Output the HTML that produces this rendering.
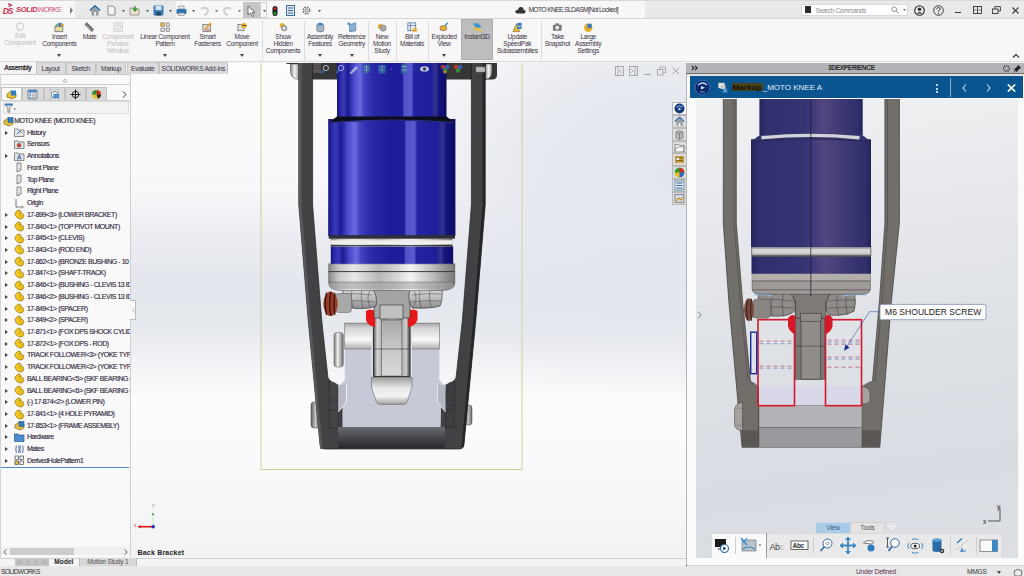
<!DOCTYPE html>
<html><head><meta charset="utf-8">
<style>
*{margin:0;padding:0;box-sizing:border-box}
html,body{width:1024px;height:576px;overflow:hidden;background:#f5f5f5;font-family:"Liberation Sans",sans-serif;color:#333}
.a{position:absolute}
.t{position:absolute;white-space:nowrap;font-size:7px;line-height:8px}
#title{left:0;top:0;width:1024px;height:19px;background:#f7f7f7;border-top:1px solid #d9d9d9;border-bottom:1px solid #d6d6d6}
#ribbon{left:0;top:19px;width:1024px;height:43px;background:#f7f7f7;border-bottom:1px solid #dadada}
#tabs{left:0;top:62px;width:228px;height:12px;z-index:5}
#fm{left:0;top:74px;width:131px;height:483px;background:#f9f9f9;border-right:1px solid #cfcfcf;overflow:hidden}
#gfx{left:131px;top:63px;width:556px;height:494px;background:radial-gradient(ellipse 62% 48% at 100% 22%, rgba(228,231,238,1) 0%, rgba(228,231,238,0.85) 45%, rgba(228,231,238,0) 100%),linear-gradient(180deg,#fdfdfd 0%,#f7f8f9 25%,#ebedf2 35%,#e3e6ec 45%,#e6e9ee 54%,#f1f2f5 60%,#fcfcfc 68%,#f8f9fa 84%,#f0f2f4 100%)}
#tp{left:686px;top:62px;width:338px;height:502.5px;background:#fbfbfb}
#status{left:0;top:564.5px;width:1024px;height:11.5px;background:#e8e8e8;border-top:1px solid #d4d4d4}
.rl{position:absolute;width:80px;text-align:center;font-size:6.6px;line-height:7px;letter-spacing:-0.3px;white-space:nowrap}
.rb{position:absolute;top:0;text-align:center;font-size:7px;line-height:7px;color:#3b3344}
.rb.dis{color:#b8b8b8}
.sep{position:absolute;top:2px;width:1px;height:40px;background:#dcdcdc}
.tab{position:absolute;top:0;height:12px;font-size:6.6px;line-height:11px;letter-spacing:-0.3px;text-align:center;color:#3a3346;background:#dcdcdc;border-right:1px solid #c2c2c2;border-top:1px solid #c8c8c8;border-left:1px solid #c8c8c8;white-space:nowrap}
.row{position:absolute;height:12px;font-size:7px;line-height:12px;letter-spacing:-0.45px;color:#2a2238;white-space:nowrap;overflow:hidden;width:104px;-webkit-text-stroke:0.12px #2a2238}
</style></head><body>
<div id="title" class="a">
 <div class="a" style="left:75px;top:0;width:101px;height:17px;background:#e9e9e9"></div>
 <div class="a" style="left:645px;top:0;width:379px;height:17px;background:#e9e9e9"></div>
 <div class="a" style="left:243px;top:1px;width:17px;height:16px;background:#c6c6c6"></div>
 <div class="a" style="left:260px;top:1px;width:7px;height:16px;background:#f9f9f9;border:1px solid #cfcfcf"></div>
 <svg class="a" style="left:2px;top:2px" width="13" height="12" viewBox="0 0 13 12"><path d="M6 1.2 Q8.5 1.2 9.5 2.2 L6.5 3.8" stroke="#cc2c4c" stroke-width="1.2" fill="none"/><text x="0.8" y="10.6" font-family="Liberation Sans" font-weight="bold" font-style="italic" font-size="8.5" fill="#cc2c4c" letter-spacing="-1.2">DS</text></svg>
 <div class="t" style="left:16px;top:4px;font-size:7.5px;line-height:10px;font-weight:bold;font-style:italic;color:#cf2d52;letter-spacing:-0.3px">SOLID<span style="font-weight:normal;letter-spacing:-1.1px;color:#d8587a">WORKS</span></div>
 <svg class="a" style="left:69px;top:6px" width="5" height="7"><path d="M1 0 L4 3.5 L1 7Z" fill="#7a7a7a"/></svg>
 <!-- home -->
 <svg class="a" style="left:89px;top:3.5px" width="12" height="11" viewBox="0 0 12 11"><path d="M1 5.5 L6 1 L11 5.5" stroke="#1e5f99" stroke-width="1.6" fill="none"/><path d="M2.5 5.5 V10.5 H9.5 V5.5 L6 2.5Z" fill="#9a9a9a"/><rect x="5" y="7" width="2" height="3.5" fill="#eee"/></svg>
 <!-- new -->
 <svg class="a" style="left:107px;top:4px" width="9" height="11"><path d="M1 1 H6 L8 3 V10 H1Z" fill="#f4f4f4" stroke="#8a8a8a"/></svg>
 <svg class="a" style="left:121.5px;top:8.5px" width="3" height="2.5"><path d="M0 0 H3 L1.5 2.2Z" fill="#555"/></svg>
 <!-- open -->
 <svg class="a" style="left:129px;top:4px" width="12" height="11"><path d="M1 3 H5 L6 4 H10 V10 H1Z" fill="#e7e2c8" stroke="#8d8d8d" stroke-width="0.8"/><path d="M6 1 V5 M4 3.5 L6 6 L8 3.5" stroke="#2a9a2a" stroke-width="1.4" fill="none"/></svg>
 <svg class="a" style="left:145.5px;top:8.5px" width="3" height="2.5"><path d="M0 0 H3 L1.5 2.2Z" fill="#555"/></svg>
 <!-- save -->
 <svg class="a" style="left:153px;top:4px" width="11" height="11"><rect x="0.5" y="0.5" width="10" height="10" rx="1" fill="#3d7fb8"/><rect x="2.5" y="1" width="6" height="4" fill="#d8e4ee"/><rect x="3" y="7" width="5" height="3.5" fill="#264a6a"/></svg>
 <svg class="a" style="left:168.5px;top:8.5px" width="3" height="2.5"><path d="M0 0 H3 L1.5 2.2Z" fill="#555"/></svg>
 <!-- print -->
 <svg class="a" style="left:176px;top:4px" width="11" height="11"><rect x="3" y="1" width="5" height="3" fill="#eee" stroke="#888" stroke-width="0.7"/><rect x="0.5" y="4" width="10" height="5" rx="1" fill="#2f74b5"/><rect x="2.5" y="8" width="6" height="2.5" fill="#ddd" stroke="#888" stroke-width="0.6"/></svg>
 <svg class="a" style="left:191.5px;top:8.5px" width="3" height="2.5"><path d="M0 0 H3 L1.5 2.2Z" fill="#555"/></svg>
 <!-- undo/redo -->
 <svg class="a" style="left:199px;top:4px" width="11" height="11"><path d="M2 4 Q7 1 9 5 Q9 9 5 10" stroke="#cfcfcf" stroke-width="2" fill="none"/></svg>
 <svg class="a" style="left:214.5px;top:8.5px" width="3" height="2.5"><path d="M0 0 H3 L1.5 2.2Z" fill="#777"/></svg>
 <svg class="a" style="left:222px;top:4px" width="11" height="11"><path d="M9 4 Q4 1 2 5 Q2 9 6 10" stroke="#cfcfcf" stroke-width="2" fill="none"/></svg>
 <svg class="a" style="left:237.5px;top:8.5px" width="3" height="2.5"><path d="M0 0 H3 L1.5 2.2Z" fill="#777"/></svg>
 <svg class="a" style="left:247px;top:4px" width="9" height="12"><path d="M1 1 L1 10 L3.5 8 L5.5 11.5 L7 10.8 L5 7.5 L8 7.5Z" fill="#fafafa" stroke="#555" stroke-width="0.8"/></svg>
 <svg class="a" style="left:262.5px;top:8.5px" width="3" height="2.5"><path d="M0 0 H3 L1.5 2.2Z" fill="#555"/></svg>
 <svg class="a" style="left:272px;top:5px" width="6" height="10"><rect x="0.5" y="0" width="5" height="10" rx="2.5" fill="#222"/><circle cx="3" cy="2.6" r="1.3" fill="#e02020"/><circle cx="3" cy="7.4" r="1.3" fill="#22b030"/></svg>
 <svg class="a" style="left:286px;top:4px" width="9" height="11"><rect x="0.5" y="0.5" width="8" height="10" fill="#dde6ef" stroke="#3a6e9e"/><path d="M2 3 H7 M2 5.5 H7 M2 8 H7" stroke="#3a6e9e"/></svg>
 <svg class="a" style="left:301px;top:4px" width="11" height="11" viewBox="0 0 11 11"><circle cx="5.5" cy="5.5" r="3.3" fill="none" stroke="#6a6a6a" stroke-width="1.4" stroke-dasharray="1.6 1"/><circle cx="5.5" cy="5.5" r="1.5" fill="none" stroke="#6a6a6a" stroke-width="0.9"/></svg>
 <svg class="a" style="left:317.5px;top:8.5px" width="3" height="2.5"><path d="M0 0 H3 L1.5 2.2Z" fill="#555"/></svg>
 <!-- title -->
 <svg class="a" style="left:515px;top:5px" width="11" height="8"><path d="M2.5 7.5 Q0 7.5 0.5 5 Q1 3.5 3 4 Q3.5 0.5 6.5 1 Q9 1.5 8.5 4 Q11 4 10.5 6.3 Q10 7.5 8.5 7.5Z" fill="#333"/></svg>
 <div class="t" style="left:528.4px;top:4.5px;font-size:6.8px;color:#3c3046;letter-spacing:-0.68px">MOTO KNEE.SLDASM[Not Locked]</div>
 <!-- search -->
 <div class="a" style="left:801px;top:3px;width:107px;height:12px;background:#fff;border:1px solid #d8d8d8"></div>
 <div class="a" style="left:805px;top:5px;width:6px;height:7px;background:#2a2a2a"></div>
 <div class="t" style="left:815.5px;top:5.5px;font-size:6.5px;color:#8a8a8a;letter-spacing:-0.35px">Search Commands</div>
 <svg class="a" style="left:891px;top:5px" width="8" height="8"><circle cx="3.2" cy="3.2" r="2.4" fill="none" stroke="#888" stroke-width="0.9"/><path d="M5 5 L7.5 7.5" stroke="#888" stroke-width="1"/></svg>
 <svg class="a" style="left:903px;top:8px" width="3" height="2"><path d="M0 0 H3 L1.5 2Z" fill="#777"/></svg>
 <svg class="a" style="left:914px;top:4px" width="11" height="11"><circle cx="5.5" cy="5.5" r="4.8" fill="none" stroke="#2a2a2a" stroke-width="1.1"/><circle cx="5.5" cy="4.3" r="1.7" fill="#2a2a2a"/><path d="M2.5 8.5 Q5.5 5.5 8.5 8.5" fill="#2a2a2a"/></svg>
 <svg class="a" style="left:933px;top:4px" width="11" height="11"><circle cx="5.5" cy="5.5" r="4.8" fill="none" stroke="#2a2a2a" stroke-width="0.9"/><path d="M3.8 4.2 Q3.8 2.5 5.5 2.5 Q7.2 2.5 7.2 4 Q7.2 5 5.5 5.8 V6.8" fill="none" stroke="#2a2a2a" stroke-width="0.9"/><circle cx="5.5" cy="8.4" r="0.6" fill="#2a2a2a"/></svg>
 <div class="a" style="left:955px;top:11px;width:6px;height:1.3px;background:#333"></div>
 <svg class="a" style="left:973px;top:5px" width="9" height="8"><rect x="0.5" y="0.5" width="8" height="7" fill="none" stroke="#333" stroke-width="0.9"/><path d="M4.5 0.5 V7.5 M1.5 4 H3.5 M5.5 4 H7.5" stroke="#333" stroke-width="0.8"/></svg>
 <svg class="a" style="left:992px;top:5px" width="9" height="8"><rect x="0.5" y="3" width="5.5" height="4.5" fill="none" stroke="#333" stroke-width="0.9"/><path d="M2.8 3 V0.6 H8.4 V5 H6" fill="none" stroke="#333" stroke-width="0.9"/></svg>
 <svg class="a" style="left:1012px;top:6px" width="7" height="7"><path d="M0.5 0.5 L6.5 6.5 M6.5 0.5 L0.5 6.5" stroke="#333" stroke-width="1.1"/></svg>
</div>
<div id="ribbon" class="a">
<div class="a" style="left:461px;top:0px;width:32px;height:41px;background:#bdbdbd;border:1px solid #aeaeae"></div>
<div class="sep" style="left:262px"></div>
<div class="sep" style="left:304px"></div>
<div class="sep" style="left:368px"></div>
<div class="sep" style="left:396px"></div>
<div class="sep" style="left:428px"></div>
<div class="sep" style="left:541px"></div>
<svg class="a" style="left:14.8px;top:3.3px" width="10.5" height="10.5" viewBox="0 0 12 12"><circle cx="6" cy="5" r="4" fill="none" stroke="#d0d0d0" stroke-width="1.5"/><path d="M3 9 L5 11" stroke="#d0d0d0" stroke-width="1.5"/></svg>
<div class="rl" style="left:-20.0px;top:13.4px;color:#bdbdbd">Edit</div>
<div class="rl" style="left:-20.0px;top:20.2px;color:#bdbdbd">Component</div>
<svg class="a" style="left:54.2px;top:3.3px" width="10.5" height="10.5" viewBox="0 0 12 12"><path d="M1 5 H10 V11 H1Z" fill="#e8dca0" stroke="#555" stroke-width="0.8"/><rect x="5" y="1" width="4" height="4" fill="#3a7bc0"/><rect x="8" y="2" width="3" height="3" fill="#e0a020"/><path d="M2 4 L5 2" stroke="#3a9a3a" stroke-width="1.3"/></svg>
<div class="rl" style="left:19.4px;top:14.2px;color:#3b3146">Insert</div>
<div class="rl" style="left:19.4px;top:21.0px;color:#3b3146">Components</div>
<svg class="a" style="left:57.4px;top:35px" width="4" height="3"><path d="M0 0 H4 L2 3Z" fill="#444"/></svg>
<svg class="a" style="left:84.4px;top:3.3px" width="10.5" height="10.5" viewBox="0 0 12 12"><path d="M2 3 L9 10 M3 1.5 L10 8.5" stroke="#6a6a6a" stroke-width="2.2" stroke-linecap="round"/><path d="M2 3 L9 10" stroke="#d8d8d8" stroke-width="0.8"/></svg>
<div class="rl" style="left:49.6px;top:14.2px;color:#3b3146">Mate</div>
<svg class="a" style="left:112.6px;top:3.3px" width="10.5" height="10.5" viewBox="0 0 12 12"><rect x="1" y="1" width="10" height="10" fill="#eee" stroke="#d0d0d0"/><circle cx="6" cy="6" r="3" fill="none" stroke="#d0d0d0"/></svg>
<div class="rl" style="left:77.8px;top:14.2px;color:#bdbdbd">Component</div>
<div class="rl" style="left:77.8px;top:21.0px;color:#bdbdbd">Preview</div>
<div class="rl" style="left:77.8px;top:27.8px;color:#bdbdbd">Window</div>
<svg class="a" style="left:159.8px;top:3.3px" width="10.5" height="10.5" viewBox="0 0 12 12"><rect x="1" y="1" width="4" height="4" fill="#e8c040" stroke="#555" stroke-width="0.6"/><rect x="7" y="1" width="4" height="4" fill="#ddd" stroke="#555" stroke-width="0.6"/><rect x="1" y="7" width="4" height="4" fill="#ddd" stroke="#555" stroke-width="0.6"/><rect x="7" y="7" width="4" height="4" fill="#ddd" stroke="#555" stroke-width="0.6"/></svg>
<div class="rl" style="left:125.0px;top:14.2px;color:#3b3146">Linear Component</div>
<div class="rl" style="left:125.0px;top:21.0px;color:#3b3146">Pattern</div>
<svg class="a" style="left:163.0px;top:35px" width="4" height="3"><path d="M0 0 H4 L2 3Z" fill="#444"/></svg>
<svg class="a" style="left:202.3px;top:3.3px" width="10.5" height="10.5" viewBox="0 0 12 12"><rect x="1" y="3" width="9" height="8" fill="#ddd" stroke="#555" stroke-width="0.7"/><path d="M4 8 L10 1" stroke="#e0a020" stroke-width="1.8"/><path d="M3 9 H9" stroke="#c03030" stroke-width="0.8"/></svg>
<div class="rl" style="left:167.5px;top:14.2px;color:#3b3146">Smart</div>
<div class="rl" style="left:167.5px;top:21.0px;color:#3b3146">Fasteners</div>
<svg class="a" style="left:236.8px;top:3.3px" width="10.5" height="10.5" viewBox="0 0 12 12"><rect x="1" y="3" width="7" height="7" fill="#ddd" stroke="#555" stroke-width="0.7"/><circle cx="8" cy="4" r="3" fill="#e8b020"/><path d="M6 4 H11" stroke="#333" stroke-width="0.8"/></svg>
<div class="rl" style="left:202.0px;top:14.2px;color:#3b3146">Move</div>
<div class="rl" style="left:202.0px;top:21.0px;color:#3b3146">Component</div>
<svg class="a" style="left:240.0px;top:35px" width="4" height="3"><path d="M0 0 H4 L2 3Z" fill="#444"/></svg>
<svg class="a" style="left:277.8px;top:3.3px" width="10.5" height="10.5" viewBox="0 0 12 12"><circle cx="5" cy="4" r="3" fill="#e8b030"/><circle cx="7" cy="7" r="3.5" fill="#999"/><circle cx="7" cy="7" r="1.6" fill="#eee"/></svg>
<div class="rl" style="left:243.0px;top:14.2px;color:#3b3146">Show</div>
<div class="rl" style="left:243.0px;top:21.0px;color:#3b3146">Hidden</div>
<div class="rl" style="left:243.0px;top:27.8px;color:#3b3146">Components</div>
<svg class="a" style="left:314.8px;top:3.3px" width="10.5" height="10.5" viewBox="0 0 12 12"><rect x="2" y="2" width="8" height="9" rx="2" fill="#a8b4c0" stroke="#4a6a8a" stroke-width="0.7"/><rect x="4" y="1" width="4" height="3" fill="#3a7bc0"/></svg>
<div class="rl" style="left:280.0px;top:14.2px;color:#3b3146">Assembly</div>
<div class="rl" style="left:280.0px;top:21.0px;color:#3b3146">Features</div>
<svg class="a" style="left:318.0px;top:35px" width="4" height="3"><path d="M0 0 H4 L2 3Z" fill="#444"/></svg>
<svg class="a" style="left:346.6px;top:3.3px" width="10.5" height="10.5" viewBox="0 0 12 12"><path d="M3 3 L10 1 V10 L3 11Z" fill="#8ab0d8" stroke="#3a6a9a" stroke-width="0.7"/><circle cx="2" cy="2" r="1.5" fill="#3a7bc0"/></svg>
<div class="rl" style="left:311.8px;top:14.2px;color:#3b3146">Reference</div>
<div class="rl" style="left:311.8px;top:21.0px;color:#3b3146">Geometry</div>
<svg class="a" style="left:349.8px;top:35px" width="4" height="3"><path d="M0 0 H4 L2 3Z" fill="#444"/></svg>
<svg class="a" style="left:376.8px;top:3.3px" width="10.5" height="10.5" viewBox="0 0 12 12"><circle cx="4" cy="5" r="3" fill="#e8b030"/><circle cx="7" cy="7" r="3.5" fill="#aaa" stroke="#666" stroke-width="0.6"/></svg>
<div class="rl" style="left:342.0px;top:14.2px;color:#3b3146">New</div>
<div class="rl" style="left:342.0px;top:21.0px;color:#3b3146">Motion</div>
<div class="rl" style="left:342.0px;top:27.8px;color:#3b3146">Study</div>
<svg class="a" style="left:406.8px;top:3.3px" width="10.5" height="10.5" viewBox="0 0 12 12"><rect x="1" y="1" width="9" height="9" fill="#eee" stroke="#3a6a9a" stroke-width="0.8"/><path d="M1 4 H10 M4 1 V10" stroke="#3a6a9a" stroke-width="0.7"/><circle cx="9" cy="9" r="2.5" fill="#e8b030"/></svg>
<div class="rl" style="left:372.0px;top:14.2px;color:#3b3146">Bill of</div>
<div class="rl" style="left:372.0px;top:21.0px;color:#3b3146">Materials</div>
<svg class="a" style="left:438.8px;top:3.3px" width="10.5" height="10.5" viewBox="0 0 12 12"><ellipse cx="5" cy="7" rx="4" ry="3" fill="#e8b030" stroke="#555" stroke-width="0.6"/><path d="M7 4 L10 1" stroke="#3a7bc0" stroke-width="1.6"/></svg>
<div class="rl" style="left:404.0px;top:14.2px;color:#3b3146">Exploded</div>
<div class="rl" style="left:404.0px;top:21.0px;color:#3b3146">View</div>
<svg class="a" style="left:442.0px;top:35px" width="4" height="3"><path d="M0 0 H4 L2 3Z" fill="#444"/></svg>
<svg class="a" style="left:471.8px;top:3.3px" width="10.5" height="10.5" viewBox="0 0 12 12"><path d="M1 2 L7 1 L11 6 L5 7Z" fill="#3a9ad0"/><path d="M2 5 L10 8 L11 11 L3 9Z" fill="#e8c040"/></svg>
<div class="rl" style="left:437.0px;top:14.2px;color:#3b3146">Instant3D</div>
<svg class="a" style="left:512.1px;top:3.3px" width="10.5" height="10.5" viewBox="0 0 12 12"><path d="M1 11 L5 2 L9 11Z" fill="#e8c020" stroke="#555" stroke-width="0.6"/><rect x="6" y="1" width="5" height="7" fill="#3a7bc0"/><path d="M7 5 H10" stroke="#fff"/></svg>
<div class="rl" style="left:477.3px;top:14.2px;color:#3b3146">Update</div>
<div class="rl" style="left:477.3px;top:21.0px;color:#3b3146">SpeedPak</div>
<div class="rl" style="left:477.3px;top:27.8px;color:#3b3146">Subassemblies</div>
<svg class="a" style="left:552.2px;top:3.3px" width="10.5" height="10.5" viewBox="0 0 12 12"><rect x="1" y="3" width="10" height="7" rx="1" fill="#777"/><rect x="4" y="1.5" width="4" height="2" fill="#777"/><circle cx="6" cy="6.5" r="2.2" fill="#eee"/></svg>
<div class="rl" style="left:517.4px;top:14.2px;color:#3b3146">Take</div>
<div class="rl" style="left:517.4px;top:21.0px;color:#3b3146">Snapshot</div>
<svg class="a" style="left:583.0px;top:3.3px" width="10.5" height="10.5" viewBox="0 0 12 12"><circle cx="6" cy="6.5" r="4.8" fill="#e8b020"/><rect x="5" y="2" width="5" height="5" fill="#3a7bc0"/></svg>
<div class="rl" style="left:548.2px;top:14.2px;color:#3b3146">Large</div>
<div class="rl" style="left:548.2px;top:21.0px;color:#3b3146">Assembly</div>
<div class="rl" style="left:548.2px;top:27.8px;color:#3b3146">Settings</div>
<svg class="a" style="left:1012px;top:34px" width="8" height="5"><path d="M1 4.5 L4 1.5 L7 4.5" stroke="#333" stroke-width="1.2" fill="none"/></svg>
</div>
<div id="tabs" class="a">
<div class="tab" style="left:0px;width:35.6px;background:#f5f5f5;border:none;color:#1a1a1a;font-weight:normal;letter-spacing:-0.3px;font-size:6.8px;-webkit-text-stroke:0.25px #222">Assembly</div>
<div class="tab" style="left:35.6px;width:30.0px">Layout</div>
<div class="tab" style="left:65.6px;width:30.0px">Sketch</div>
<div class="tab" style="left:95.6px;width:30.9px">Markup</div>
<div class="tab" style="left:126.5px;width:32.4px">Evaluate</div>
<div class="tab" style="left:158.9px;width:68.9px">SOLIDWORKS Add-Ins</div>
</div>
<div id="fm" class="a">
<div class="a" style="left:0;top:0;width:131px;height:1px;background:#c8c8c8"></div>
<div class="a" style="left:63px;top:5px;width:4px;height:4px;border:1px solid #bbb;border-radius:50%"></div>
<div class="a" style="left:0;top:10px;width:131px;height:1px;background:#cfcfcf"></div>
<div class="a" style="left:1.3px;top:13px;width:20.4px;height:13.5px;background:#f9f9f9;border:1px solid #c4c4c4;border-bottom:none;"></div>
<div class="a" style="left:21.8px;top:13px;width:21.8px;height:13.5px;background:#d9d9d9;border:1px solid #c4c4c4;"></div>
<div class="a" style="left:43.5px;top:13px;width:21.1px;height:13.5px;background:#d9d9d9;border:1px solid #c4c4c4;"></div>
<div class="a" style="left:64.6px;top:13px;width:21.8px;height:13.5px;background:#d9d9d9;border:1px solid #c4c4c4;"></div>
<div class="a" style="left:86.4px;top:13px;width:21.0px;height:13.5px;background:#d9d9d9;border:1px solid #c4c4c4;"></div>
<div class="a" style="left:0;top:26px;width:131px;height:1px;background:#d0d0d0"></div>
<svg class="a" style="left:6.0px;top:15px" width="11" height="11" viewBox="0 0 11 11"><path d="M1 5 L5 2 L10 4 L10 8 L6 10 L1 8Z" fill="#e8c030" stroke="#6a5a10" stroke-width="0.6"/><rect x="5" y="1.5" width="5" height="5" fill="#2f7fc8"/></svg>
<svg class="a" style="left:27.1px;top:15px" width="11" height="11" viewBox="0 0 11 11"><rect x="1" y="1" width="9" height="9" rx="1" fill="#eef2f6" stroke="#4a5a6a" stroke-width="0.7"/><rect x="1.3" y="1.3" width="8.4" height="2" fill="#3a7ac0"/><path d="M2.3 4.9 H4 M2.3 6.8 H4 M2.3 8.6 H4" stroke="#3a7ac0" stroke-width="1.1"/><path d="M4.8 4.9 H9 M4.8 6.8 H9 M4.8 8.6 H9" stroke="#8a8a8a" stroke-width="0.8"/></svg>
<svg class="a" style="left:48.5px;top:15px" width="11" height="11" viewBox="0 0 11 11"><path d="M2.5 3.5 Q5.5 1.5 9 3.5 V8 Q5.5 10 2.5 8Z" fill="#f4f4f4" stroke="#555" stroke-width="0.6"/><rect x="4.5" y="5" width="5.5" height="4" fill="#2f7fc8"/><path d="M5.5 7 H9" stroke="#cde" stroke-width="0.6"/><path d="M0.8 0.8 H2 M9 0.8 H10.2 M0.8 10.2 H2 M9 10.2 H10.2" stroke="#3a8ad0" stroke-width="0.8"/></svg>
<svg class="a" style="left:70.0px;top:15px" width="11" height="11" viewBox="0 0 11 11"><circle cx="5.5" cy="5.5" r="3.2" fill="none" stroke="#222" stroke-width="1"/><path d="M5.5 0.5 V10.5 M0.5 5.5 H10.5" stroke="#222" stroke-width="1"/></svg>
<svg class="a" style="left:91.4px;top:15px" width="11" height="11" viewBox="0 0 11 11"><circle cx="5.5" cy="5.5" r="4.5" fill="#e8c030"/><path d="M5.5 5.5 L5.5 1 A4.5 4.5 0 0 1 10 5.5Z" fill="#d02020"/><path d="M5.5 5.5 L1 5.5 A4.5 4.5 0 0 1 5.5 1Z" fill="#2a8a3a"/><path d="M5.5 5.5 L10 5.5 A4.5 4.5 0 0 1 7 9.7Z" fill="#222"/></svg>
<svg class="a" style="left:122px;top:17px" width="5" height="7"><path d="M1 0.5 L4 3.5 L1 6.5" stroke="#333" stroke-width="1" fill="none"/></svg>
<div class="a" style="left:2.6px;top:27.4px;width:126px;height:13px;background:#f2f2f2;border:1px solid #dedede"></div>
<svg class="a" style="left:4px;top:29px" width="13" height="10"><path d="M1 1.5 H8.5 L5.6 5 V9.2 L3.9 9.2 V5Z" fill="#e8e8e8" stroke="#777" stroke-width="0.8"/><rect x="0.6" y="0.4" width="8.4" height="2" rx="1" fill="#3a7bc0"/><path d="M9.8 5.5 H12 L10.9 6.8Z" fill="#333"/></svg>
<svg class="a" style="left:2.6px;top:41.5px" width="11" height="11" viewBox="0 0 11 11"><path d="M1 5 L5 2 L10 4 L10 8 L6 10 L1 8Z" fill="#e8c030" stroke="#6a5a10" stroke-width="0.6"/><rect x="5" y="1.5" width="5" height="5" fill="#2f7fc8" stroke="#1a4a7a" stroke-width="0.5"/></svg>
<div class="row" style="left:14.2px;top:41.0px">MOTO KNEE (MOTO KNEE)</div>
<svg class="a" style="left:5px;top:56.7px" width="3" height="4"><path d="M0 0 L3 2 L0 4Z" fill="#444"/></svg>
<svg class="a" style="left:14px;top:53.2px" width="11" height="11" viewBox="0 0 11 11"><path d="M0.5 2 H4 L5 3 H10 V9.5 H0.5Z" fill="#e4e4e4" stroke="#707070" stroke-width="0.8"/><path d="M3 7 L6 4 L7.5 5.5" stroke="#2a6ab0" stroke-width="1" fill="none"/></svg>
<div class="row" style="left:26.9px;top:52.7px">History</div>
<svg class="a" style="left:14px;top:64.9px" width="11" height="11" viewBox="0 0 11 11"><path d="M0.5 2 H4 L5 3 H10 V9.5 H0.5Z" fill="#e4e4e4" stroke="#707070" stroke-width="0.8"/><circle cx="5" cy="6.3" r="2" fill="#d04030" stroke="#555" stroke-width="0.4"/></svg>
<div class="row" style="left:26.9px;top:64.4px">Sensors</div>
<svg class="a" style="left:5px;top:80.2px" width="3" height="4"><path d="M0 0 L3 2 L0 4Z" fill="#444"/></svg>
<svg class="a" style="left:14px;top:76.7px" width="11" height="11" viewBox="0 0 11 11"><path d="M0.5 2 H4 L5 3 H10 V9.5 H0.5Z" fill="#e4e4e4" stroke="#707070" stroke-width="0.8"/><path d="M3.5 8.5 L5.3 3.8 L7 8.5 M4.2 7 H6.4" stroke="#2a5ab0" stroke-width="0.9" fill="none"/></svg>
<div class="row" style="left:26.9px;top:76.2px">Annotations</div>
<svg class="a" style="left:14px;top:88.4px" width="11" height="11" viewBox="0 0 11 11"><path d="M3 1 H7 V8 L3 10Z" fill="none" stroke="#555" stroke-width="0.7"/><path d="M5 2 V9" stroke="#555" stroke-width="0.6" stroke-dasharray="1 1"/></svg>
<div class="row" style="left:26.9px;top:87.9px">Front Plane</div>
<svg class="a" style="left:14px;top:100.1px" width="11" height="11" viewBox="0 0 11 11"><path d="M3 1 H7 V8 L3 10Z" fill="none" stroke="#555" stroke-width="0.7"/><path d="M5 2 V9" stroke="#555" stroke-width="0.6" stroke-dasharray="1 1"/></svg>
<div class="row" style="left:26.9px;top:99.6px">Top Plane</div>
<svg class="a" style="left:14px;top:111.8px" width="11" height="11" viewBox="0 0 11 11"><path d="M3 1 H7 V8 L3 10Z" fill="none" stroke="#555" stroke-width="0.7"/><path d="M5 2 V9" stroke="#555" stroke-width="0.6" stroke-dasharray="1 1"/></svg>
<div class="row" style="left:26.9px;top:111.3px">Right Plane</div>
<svg class="a" style="left:14px;top:123.5px" width="11" height="11" viewBox="0 0 11 11"><path d="M2 1 V9 H9" fill="none" stroke="#555" stroke-width="0.8"/><path d="M8 7.5 L9.5 9 L8 10.5" fill="none" stroke="#555" stroke-width="0.6"/></svg>
<div class="row" style="left:26.9px;top:123.0px">Origin</div>
<svg class="a" style="left:5px;top:138.8px" width="3" height="4"><path d="M0 0 L3 2 L0 4Z" fill="#444"/></svg>
<svg class="a" style="left:14px;top:135.3px" width="11" height="11" viewBox="0 0 11 11"><path d="M2.5 2.5 Q4 0.3 6.3 1.5 Q7.5 3 6.5 4 Q8.5 3.5 9.5 5.5 Q10.5 8 8.5 9.5 Q6 10.8 3.5 9 Q0.8 7 1 4.5 Q1.3 3.3 2.5 2.5Z" fill="#f2c61a" stroke="#7a5a10" stroke-width="0.6"/><path d="M4.5 3 Q6 4.5 5.5 6.5 M6.5 5.5 Q8 6.5 7.5 8.5" stroke="#b08a10" stroke-width="0.5" fill="none"/></svg>
<div class="row" style="left:26.9px;top:134.8px">17-899&lt;3&gt; (LOWER BRACKET)</div>
<svg class="a" style="left:5px;top:150.5px" width="3" height="4"><path d="M0 0 L3 2 L0 4Z" fill="#444"/></svg>
<svg class="a" style="left:14px;top:147.0px" width="11" height="11" viewBox="0 0 11 11"><path d="M2.5 2.5 Q4 0.3 6.3 1.5 Q7.5 3 6.5 4 Q8.5 3.5 9.5 5.5 Q10.5 8 8.5 9.5 Q6 10.8 3.5 9 Q0.8 7 1 4.5 Q1.3 3.3 2.5 2.5Z" fill="#f2c61a" stroke="#7a5a10" stroke-width="0.6"/><path d="M4.5 3 Q6 4.5 5.5 6.5 M6.5 5.5 Q8 6.5 7.5 8.5" stroke="#b08a10" stroke-width="0.5" fill="none"/></svg>
<div class="row" style="left:26.9px;top:146.5px">17-840&lt;1&gt; (TOP PIVOT MOUNT)</div>
<svg class="a" style="left:5px;top:162.2px" width="3" height="4"><path d="M0 0 L3 2 L0 4Z" fill="#444"/></svg>
<svg class="a" style="left:14px;top:158.7px" width="11" height="11" viewBox="0 0 11 11"><path d="M2.5 2.5 Q4 0.3 6.3 1.5 Q7.5 3 6.5 4 Q8.5 3.5 9.5 5.5 Q10.5 8 8.5 9.5 Q6 10.8 3.5 9 Q0.8 7 1 4.5 Q1.3 3.3 2.5 2.5Z" fill="#f2c61a" stroke="#7a5a10" stroke-width="0.6"/><path d="M4.5 3 Q6 4.5 5.5 6.5 M6.5 5.5 Q8 6.5 7.5 8.5" stroke="#b08a10" stroke-width="0.5" fill="none"/></svg>
<div class="row" style="left:26.9px;top:158.2px">17-845&lt;1&gt; (CLEVIS)</div>
<svg class="a" style="left:5px;top:173.9px" width="3" height="4"><path d="M0 0 L3 2 L0 4Z" fill="#444"/></svg>
<svg class="a" style="left:14px;top:170.4px" width="11" height="11" viewBox="0 0 11 11"><path d="M2.5 2.5 Q4 0.3 6.3 1.5 Q7.5 3 6.5 4 Q8.5 3.5 9.5 5.5 Q10.5 8 8.5 9.5 Q6 10.8 3.5 9 Q0.8 7 1 4.5 Q1.3 3.3 2.5 2.5Z" fill="#f2c61a" stroke="#7a5a10" stroke-width="0.6"/><path d="M4.5 3 Q6 4.5 5.5 6.5 M6.5 5.5 Q8 6.5 7.5 8.5" stroke="#b08a10" stroke-width="0.5" fill="none"/></svg>
<div class="row" style="left:26.9px;top:169.9px">17-843&lt;1&gt; (ROD END)</div>
<svg class="a" style="left:5px;top:185.6px" width="3" height="4"><path d="M0 0 L3 2 L0 4Z" fill="#444"/></svg>
<svg class="a" style="left:14px;top:182.1px" width="11" height="11" viewBox="0 0 11 11"><path d="M2.5 2.5 Q4 0.3 6.3 1.5 Q7.5 3 6.5 4 Q8.5 3.5 9.5 5.5 Q10.5 8 8.5 9.5 Q6 10.8 3.5 9 Q0.8 7 1 4.5 Q1.3 3.3 2.5 2.5Z" fill="#f2c61a" stroke="#7a5a10" stroke-width="0.6"/><path d="M4.5 3 Q6 4.5 5.5 6.5 M6.5 5.5 Q8 6.5 7.5 8.5" stroke="#b08a10" stroke-width="0.5" fill="none"/></svg>
<div class="row" style="left:26.9px;top:181.6px">17-862&lt;1&gt; (BRONZE BUSHING - 10 ID</div>
<svg class="a" style="left:5px;top:197.4px" width="3" height="4"><path d="M0 0 L3 2 L0 4Z" fill="#444"/></svg>
<svg class="a" style="left:14px;top:193.9px" width="11" height="11" viewBox="0 0 11 11"><path d="M2.5 2.5 Q4 0.3 6.3 1.5 Q7.5 3 6.5 4 Q8.5 3.5 9.5 5.5 Q10.5 8 8.5 9.5 Q6 10.8 3.5 9 Q0.8 7 1 4.5 Q1.3 3.3 2.5 2.5Z" fill="#f2c61a" stroke="#7a5a10" stroke-width="0.6"/><path d="M4.5 3 Q6 4.5 5.5 6.5 M6.5 5.5 Q8 6.5 7.5 8.5" stroke="#b08a10" stroke-width="0.5" fill="none"/></svg>
<div class="row" style="left:26.9px;top:193.4px">17-847&lt;1&gt; (SHAFT-TRACK)</div>
<svg class="a" style="left:5px;top:209.1px" width="3" height="4"><path d="M0 0 L3 2 L0 4Z" fill="#444"/></svg>
<svg class="a" style="left:14px;top:205.6px" width="11" height="11" viewBox="0 0 11 11"><path d="M2.5 2.5 Q4 0.3 6.3 1.5 Q7.5 3 6.5 4 Q8.5 3.5 9.5 5.5 Q10.5 8 8.5 9.5 Q6 10.8 3.5 9 Q0.8 7 1 4.5 Q1.3 3.3 2.5 2.5Z" fill="#f2c61a" stroke="#7a5a10" stroke-width="0.6"/><path d="M4.5 3 Q6 4.5 5.5 6.5 M6.5 5.5 Q8 6.5 7.5 8.5" stroke="#b08a10" stroke-width="0.5" fill="none"/></svg>
<div class="row" style="left:26.9px;top:205.1px">17-846&lt;1&gt; (BUSHING - CLEVIS 13 ID</div>
<svg class="a" style="left:5px;top:220.8px" width="3" height="4"><path d="M0 0 L3 2 L0 4Z" fill="#444"/></svg>
<svg class="a" style="left:14px;top:217.3px" width="11" height="11" viewBox="0 0 11 11"><path d="M2.5 2.5 Q4 0.3 6.3 1.5 Q7.5 3 6.5 4 Q8.5 3.5 9.5 5.5 Q10.5 8 8.5 9.5 Q6 10.8 3.5 9 Q0.8 7 1 4.5 Q1.3 3.3 2.5 2.5Z" fill="#f2c61a" stroke="#7a5a10" stroke-width="0.6"/><path d="M4.5 3 Q6 4.5 5.5 6.5 M6.5 5.5 Q8 6.5 7.5 8.5" stroke="#b08a10" stroke-width="0.5" fill="none"/></svg>
<div class="row" style="left:26.9px;top:216.8px">17-846&lt;2&gt; (BUSHING - CLEVIS 13 ID</div>
<svg class="a" style="left:5px;top:232.5px" width="3" height="4"><path d="M0 0 L3 2 L0 4Z" fill="#444"/></svg>
<svg class="a" style="left:14px;top:229.0px" width="11" height="11" viewBox="0 0 11 11"><path d="M2.5 2.5 Q4 0.3 6.3 1.5 Q7.5 3 6.5 4 Q8.5 3.5 9.5 5.5 Q10.5 8 8.5 9.5 Q6 10.8 3.5 9 Q0.8 7 1 4.5 Q1.3 3.3 2.5 2.5Z" fill="#f2c61a" stroke="#7a5a10" stroke-width="0.6"/><path d="M4.5 3 Q6 4.5 5.5 6.5 M6.5 5.5 Q8 6.5 7.5 8.5" stroke="#b08a10" stroke-width="0.5" fill="none"/></svg>
<div class="row" style="left:26.9px;top:228.5px">17-849&lt;1&gt; (SPACER)</div>
<svg class="a" style="left:5px;top:244.2px" width="3" height="4"><path d="M0 0 L3 2 L0 4Z" fill="#444"/></svg>
<svg class="a" style="left:14px;top:240.7px" width="11" height="11" viewBox="0 0 11 11"><path d="M2.5 2.5 Q4 0.3 6.3 1.5 Q7.5 3 6.5 4 Q8.5 3.5 9.5 5.5 Q10.5 8 8.5 9.5 Q6 10.8 3.5 9 Q0.8 7 1 4.5 Q1.3 3.3 2.5 2.5Z" fill="#f2c61a" stroke="#7a5a10" stroke-width="0.6"/><path d="M4.5 3 Q6 4.5 5.5 6.5 M6.5 5.5 Q8 6.5 7.5 8.5" stroke="#b08a10" stroke-width="0.5" fill="none"/></svg>
<div class="row" style="left:26.9px;top:240.2px">17-849&lt;2&gt; (SPACER)</div>
<svg class="a" style="left:5px;top:256.0px" width="3" height="4"><path d="M0 0 L3 2 L0 4Z" fill="#444"/></svg>
<svg class="a" style="left:14px;top:252.5px" width="11" height="11" viewBox="0 0 11 11"><path d="M2.5 2.5 Q4 0.3 6.3 1.5 Q7.5 3 6.5 4 Q8.5 3.5 9.5 5.5 Q10.5 8 8.5 9.5 Q6 10.8 3.5 9 Q0.8 7 1 4.5 Q1.3 3.3 2.5 2.5Z" fill="#f2c61a" stroke="#7a5a10" stroke-width="0.6"/><path d="M4.5 3 Q6 4.5 5.5 6.5 M6.5 5.5 Q8 6.5 7.5 8.5" stroke="#b08a10" stroke-width="0.5" fill="none"/></svg>
<div class="row" style="left:26.9px;top:252.0px">17-871&lt;1&gt; (FOX DPS SHOCK CYLIDER</div>
<svg class="a" style="left:5px;top:267.7px" width="3" height="4"><path d="M0 0 L3 2 L0 4Z" fill="#444"/></svg>
<svg class="a" style="left:14px;top:264.2px" width="11" height="11" viewBox="0 0 11 11"><path d="M2.5 2.5 Q4 0.3 6.3 1.5 Q7.5 3 6.5 4 Q8.5 3.5 9.5 5.5 Q10.5 8 8.5 9.5 Q6 10.8 3.5 9 Q0.8 7 1 4.5 Q1.3 3.3 2.5 2.5Z" fill="#f2c61a" stroke="#7a5a10" stroke-width="0.6"/><path d="M4.5 3 Q6 4.5 5.5 6.5 M6.5 5.5 Q8 6.5 7.5 8.5" stroke="#b08a10" stroke-width="0.5" fill="none"/></svg>
<div class="row" style="left:26.9px;top:263.7px">17-872&lt;1&gt; (FOX DPS - ROD)</div>
<svg class="a" style="left:5px;top:279.4px" width="3" height="4"><path d="M0 0 L3 2 L0 4Z" fill="#444"/></svg>
<svg class="a" style="left:14px;top:275.9px" width="11" height="11" viewBox="0 0 11 11"><path d="M2.5 2.5 Q4 0.3 6.3 1.5 Q7.5 3 6.5 4 Q8.5 3.5 9.5 5.5 Q10.5 8 8.5 9.5 Q6 10.8 3.5 9 Q0.8 7 1 4.5 Q1.3 3.3 2.5 2.5Z" fill="#f2c61a" stroke="#7a5a10" stroke-width="0.6"/><path d="M4.5 3 Q6 4.5 5.5 6.5 M6.5 5.5 Q8 6.5 7.5 8.5" stroke="#b08a10" stroke-width="0.5" fill="none"/></svg>
<div class="row" style="left:26.9px;top:275.4px">TRACK FOLLOWER&lt;3&gt; (YOKE TYPE F</div>
<svg class="a" style="left:5px;top:291.1px" width="3" height="4"><path d="M0 0 L3 2 L0 4Z" fill="#444"/></svg>
<svg class="a" style="left:14px;top:287.6px" width="11" height="11" viewBox="0 0 11 11"><path d="M2.5 2.5 Q4 0.3 6.3 1.5 Q7.5 3 6.5 4 Q8.5 3.5 9.5 5.5 Q10.5 8 8.5 9.5 Q6 10.8 3.5 9 Q0.8 7 1 4.5 Q1.3 3.3 2.5 2.5Z" fill="#f2c61a" stroke="#7a5a10" stroke-width="0.6"/><path d="M4.5 3 Q6 4.5 5.5 6.5 M6.5 5.5 Q8 6.5 7.5 8.5" stroke="#b08a10" stroke-width="0.5" fill="none"/></svg>
<div class="row" style="left:26.9px;top:287.1px">TRACK FOLLOWER&lt;2&gt; (YOKE TYPE F</div>
<svg class="a" style="left:5px;top:302.8px" width="3" height="4"><path d="M0 0 L3 2 L0 4Z" fill="#444"/></svg>
<svg class="a" style="left:14px;top:299.3px" width="11" height="11" viewBox="0 0 11 11"><path d="M2.5 2.5 Q4 0.3 6.3 1.5 Q7.5 3 6.5 4 Q8.5 3.5 9.5 5.5 Q10.5 8 8.5 9.5 Q6 10.8 3.5 9 Q0.8 7 1 4.5 Q1.3 3.3 2.5 2.5Z" fill="#f2c61a" stroke="#7a5a10" stroke-width="0.6"/><path d="M4.5 3 Q6 4.5 5.5 6.5 M6.5 5.5 Q8 6.5 7.5 8.5" stroke="#b08a10" stroke-width="0.5" fill="none"/></svg>
<div class="row" style="left:26.9px;top:298.8px">BALL BEARING&lt;5&gt; (SKF BEARING #6</div>
<svg class="a" style="left:5px;top:314.6px" width="3" height="4"><path d="M0 0 L3 2 L0 4Z" fill="#444"/></svg>
<svg class="a" style="left:14px;top:311.1px" width="11" height="11" viewBox="0 0 11 11"><path d="M2.5 2.5 Q4 0.3 6.3 1.5 Q7.5 3 6.5 4 Q8.5 3.5 9.5 5.5 Q10.5 8 8.5 9.5 Q6 10.8 3.5 9 Q0.8 7 1 4.5 Q1.3 3.3 2.5 2.5Z" fill="#f2c61a" stroke="#7a5a10" stroke-width="0.6"/><path d="M4.5 3 Q6 4.5 5.5 6.5 M6.5 5.5 Q8 6.5 7.5 8.5" stroke="#b08a10" stroke-width="0.5" fill="none"/></svg>
<div class="row" style="left:26.9px;top:310.6px">BALL BEARING&lt;6&gt; (SKF BEARING #6</div>
<svg class="a" style="left:5px;top:326.3px" width="3" height="4"><path d="M0 0 L3 2 L0 4Z" fill="#444"/></svg>
<svg class="a" style="left:14px;top:322.8px" width="11" height="11" viewBox="0 0 11 11"><path d="M2.5 2.5 Q4 0.3 6.3 1.5 Q7.5 3 6.5 4 Q8.5 3.5 9.5 5.5 Q10.5 8 8.5 9.5 Q6 10.8 3.5 9 Q0.8 7 1 4.5 Q1.3 3.3 2.5 2.5Z" fill="#f2c61a" stroke="#7a5a10" stroke-width="0.6"/><path d="M4.5 3 Q6 4.5 5.5 6.5 M6.5 5.5 Q8 6.5 7.5 8.5" stroke="#b08a10" stroke-width="0.5" fill="none"/></svg>
<div class="row" style="left:26.9px;top:322.3px">(-) 17-874&lt;2&gt; (LOWER PIN)</div>
<svg class="a" style="left:5px;top:338.0px" width="3" height="4"><path d="M0 0 L3 2 L0 4Z" fill="#444"/></svg>
<svg class="a" style="left:14px;top:334.5px" width="11" height="11" viewBox="0 0 11 11"><path d="M2.5 2.5 Q4 0.3 6.3 1.5 Q7.5 3 6.5 4 Q8.5 3.5 9.5 5.5 Q10.5 8 8.5 9.5 Q6 10.8 3.5 9 Q0.8 7 1 4.5 Q1.3 3.3 2.5 2.5Z" fill="#f2c61a" stroke="#7a5a10" stroke-width="0.6"/><path d="M4.5 3 Q6 4.5 5.5 6.5 M6.5 5.5 Q8 6.5 7.5 8.5" stroke="#b08a10" stroke-width="0.5" fill="none"/></svg>
<div class="row" style="left:26.9px;top:334.0px">17-841&lt;1&gt; (4 HOLE PYRAMID)</div>
<svg class="a" style="left:5px;top:349.7px" width="3" height="4"><path d="M0 0 L3 2 L0 4Z" fill="#444"/></svg>
<svg class="a" style="left:14px;top:346.2px" width="11" height="11" viewBox="0 0 11 11"><path d="M1 5 L5 2 L10 4 L10 8 L6 10 L1 8Z" fill="#e8c030" stroke="#6a5a10" stroke-width="0.6"/><rect x="5" y="1.5" width="5" height="5" fill="#2f7fc8" stroke="#1a4a7a" stroke-width="0.5"/></svg>
<div class="row" style="left:26.9px;top:345.7px">17-853&lt;1&gt; (FRAME ASSEMBLY)</div>
<svg class="a" style="left:5px;top:361.4px" width="3" height="4"><path d="M0 0 L3 2 L0 4Z" fill="#444"/></svg>
<svg class="a" style="left:14px;top:357.9px" width="11" height="11" viewBox="0 0 11 11"><path d="M0.5 2 H4 L5 3 H10 V9.5 H0.5Z" fill="#4a8ed0" stroke="#2a5a8a" stroke-width="0.7"/></svg>
<div class="row" style="left:26.9px;top:357.4px">Hardware</div>
<svg class="a" style="left:5px;top:373.2px" width="3" height="4"><path d="M0 0 L3 2 L0 4Z" fill="#444"/></svg>
<svg class="a" style="left:14px;top:369.7px" width="11" height="11" viewBox="0 0 11 11"><path d="M2.5 1.5 Q1 5 2.5 9 M4.5 1.5 Q6 5 4.5 9 M6.5 1.5 Q5 5 6.5 9 M8.5 1.5 Q10 5 8.5 9" stroke="#6a8ab0" stroke-width="1.2" fill="none"/></svg>
<div class="row" style="left:26.9px;top:369.2px">Mates</div>
<svg class="a" style="left:5px;top:384.9px" width="3" height="4"><path d="M0 0 L3 2 L0 4Z" fill="#444"/></svg>
<svg class="a" style="left:14px;top:381.4px" width="11" height="11" viewBox="0 0 11 11"><rect x="1" y="1" width="3.5" height="3.5" fill="none" stroke="#444" stroke-width="0.7"/><rect x="6" y="1" width="3.5" height="3.5" fill="none" stroke="#444" stroke-width="0.7"/><rect x="1" y="6" width="3.5" height="3.5" fill="#e8c030" stroke="#444" stroke-width="0.7"/><rect x="6" y="6" width="3.5" height="3.5" fill="none" stroke="#444" stroke-width="0.7"/></svg>
<div class="row" style="left:26.9px;top:380.9px">DerivedHolePattern1</div>
<div class="a" style="left:0;top:392.9px;width:129px;height:1px;background:#4a8ad0"></div>
<div class="a" style="left:0;top:473.3px;width:131px;height:8px;background:#f0f0f0"></div>
<div class="a" style="left:9.8px;top:473.8px;width:64px;height:7px;background:#cdcdcd"></div>
<svg class="a" style="left:3px;top:474.5px" width="4" height="6"><path d="M3.5 0.5 L0.8 3 L3.5 5.5" stroke="#555" stroke-width="0.9" fill="none"/></svg>
<svg class="a" style="left:124px;top:474.5px" width="4" height="6"><path d="M0.5 0.5 L3.2 3 L0.5 5.5" stroke="#555" stroke-width="0.9" fill="none"/></svg>
</div>
<div id="gfx" class="a">
<svg class="a" style="left:0;top:0" width="555" height="495" viewBox="131 63 555 495">
<defs>
 <linearGradient id="cyl" x1="0" x2="1" y1="0" y2="0">
  <stop offset="0" stop-color="#12127a"/><stop offset="0.03" stop-color="#2a2aa8"/><stop offset="0.06" stop-color="#3a3ab8"/><stop offset="0.1" stop-color="#1a1a92"/>
  <stop offset="0.15" stop-color="#4848c8"/><stop offset="0.21" stop-color="#6a6ae0"/><stop offset="0.25" stop-color="#4040c0"/><stop offset="0.33" stop-color="#2a2aa8"/>
  <stop offset="0.5" stop-color="#1c1c98"/><stop offset="0.6" stop-color="#1e1e9c"/><stop offset="0.61" stop-color="#5050c8"/><stop offset="0.68" stop-color="#5a5ad0"/><stop offset="0.7" stop-color="#2424a2"/>
  <stop offset="0.86" stop-color="#1e1e98"/><stop offset="0.9" stop-color="#36348e"/><stop offset="0.93" stop-color="#14147c"/><stop offset="1" stop-color="#0c0c66"/>
 </linearGradient>
 <linearGradient id="silver" x1="0" x2="1" y1="0" y2="0">
  <stop offset="0" stop-color="#8a8a8a"/><stop offset="0.08" stop-color="#c8c8c8"/><stop offset="0.2" stop-color="#e8e8e8"/><stop offset="0.4" stop-color="#b8b8b8"/>
  <stop offset="0.55" stop-color="#d8d8d8"/><stop offset="0.65" stop-color="#f4f4f4"/><stop offset="0.8" stop-color="#c4c4c4"/><stop offset="1" stop-color="#7a7a7a"/>
 </linearGradient>
 <linearGradient id="uprv" x1="0" x2="0" y1="0" y2="1">
  <stop offset="0" stop-color="#a8a8a8"/><stop offset="0.2" stop-color="#d4d4d4"/><stop offset="0.65" stop-color="#f8f8f8"/><stop offset="1" stop-color="#b0b0b0"/>
 </linearGradient>
 <linearGradient id="pin" x1="0" x2="1" y1="0" y2="0">
  <stop offset="0" stop-color="#777"/><stop offset="0.4" stop-color="#f0f0f0"/><stop offset="1" stop-color="#6a6a6a"/>
 </linearGradient>
 <linearGradient id="botband" x1="0" x2="0" y1="0" y2="1">
  <stop offset="0" stop-color="#6a6a72"/><stop offset="0.5" stop-color="#46464c"/><stop offset="1" stop-color="#2a2a2e"/>
 </linearGradient>
 <linearGradient id="wheel" x1="0" x2="1" y1="0" y2="0">
  <stop offset="0" stop-color="#5a5a5a"/><stop offset="0.1" stop-color="#d8d8d8"/><stop offset="0.25" stop-color="#a4a4a4"/><stop offset="0.5" stop-color="#e4e4e4"/><stop offset="0.75" stop-color="#a0a0a0"/><stop offset="0.9" stop-color="#d0d0d0"/><stop offset="1" stop-color="#4a4a4a"/>
 </linearGradient>
 <linearGradient id="tongue" x1="0" x2="0" y1="0" y2="1">
  <stop offset="0" stop-color="#9a9a9a"/><stop offset="0.4" stop-color="#e8e8e8"/><stop offset="0.7" stop-color="#f4f4f4"/><stop offset="1" stop-color="#a0a0a0"/>
 </linearGradient>
</defs>
<!-- drawing sheet border -->
<rect x="261" y="40" width="261" height="429.5" fill="none" stroke="#cfcf98" stroke-width="1"/>
<!-- frame top crossbar -->
<path d="M286.5 62 H497 V75 Q497 79.5 492 79.5 H299 V64 H286.5Z" fill="#363636"/>
<linearGradient id="knob" x1="0" x2="1" y1="0" y2="0"><stop offset="0" stop-color="#8a8a8a"/><stop offset="0.5" stop-color="#f4f4f4"/><stop offset="1" stop-color="#9a9a9a"/></linearGradient>
<path d="M290.5 64 H299 V79.3 Q290.5 79.3 290.5 71Z" fill="url(#knob)" stroke="#333" stroke-width="0.5"/>
<path d="M485.2 64 H492 V71 Q492 79.3 485.2 79.3Z" fill="url(#knob)" stroke="#333" stroke-width="0.5"/>
<rect x="312.7" y="62" width="8.3" height="11" fill="#5a5452"/><path d="M313 65.5 H321 M313 68.5 H321" stroke="#3a3a3a" stroke-width="0.6"/>
<!-- bracket body (behind frame corners) -->
<path d="M344.8 349 H439.4 V377 Q440 383 446 385 L456 386 V427 H328 V386 L338 385 Q344 383 344.8 377Z" fill="#c6cad6"/>
<path d="M344.8 377 Q344 383 338 385 L330 386" stroke="#fff" stroke-width="0.8" fill="none"/>
<path d="M439.4 377 Q440 383 446 385 L454 386" stroke="#f4f4f4" stroke-width="0.8" fill="none"/>
<!-- knobs --><linearGradient id="knob2" x1="0" x2="1"><stop offset="0" stop-color="#5a5a5a"/><stop offset="0.5" stop-color="#c4c4c4"/><stop offset="1" stop-color="#6a6a6a"/></linearGradient><rect x="311" y="402" width="9" height="26" rx="3" fill="url(#knob2)" stroke="#444" stroke-width="0.5"/><rect x="464" y="405" width="8" height="20" rx="3" fill="url(#knob2)" stroke="#444" stroke-width="0.5"/>
<!-- frame bars -->
<path d="M298.8 62 H312.6 V205 L321.7 320 L328 378 Q332 384 342 392 L342 430 H441 L442 392 Q452 384 456 378 L462.4 320 L471.4 205 V62 H485.2 V205 L475.8 320 L463.8 446 Q463 449 459 449 H325 Q321 449 320.2 446 L308.2 320 L298.8 205Z" fill="#424244" stroke="#222" stroke-width="0.7"/>
<path d="M298.8 62 H301.5 V205 L310.8 320 L322.6 449 H320.2 L308.2 320 L298.8 205Z" fill="#58585a"/>
<path d="M482.5 62 H485.2 V205 L475.8 320 L463.8 447 L461.5 447 L473.2 320 L482.5 205Z" fill="#262628"/>
<path d="M329 381 Q334 382 338.2 385 V428 H330Z" fill="#46464a" stroke="#222" stroke-width="0.5"/><path d="M330 400 H338 M330.5 410 H338" stroke="#222" stroke-width="0.5"/><path d="M338.2 385 Q343 386 346.5 384 V402 Q342 408 338.2 412Z" fill="#b8bcc8"/><path d="M346.5 384 V402 Q342 408 338.2 412" stroke="#fafafa" stroke-width="0.8" fill="none"/>
<path d="M455 381 Q450 382 445.6 385 V428 H454Z" fill="#3e3e42" stroke="#222" stroke-width="0.5"/><path d="M446 400 H454 M446 410 H453.5" stroke="#222" stroke-width="0.5"/><path d="M445.6 385 Q441 386 437.5 384 V402 Q442 408 445.6 412Z" fill="#b4b8c4"/><path d="M437.5 384 V402 Q442 408 445.6 412" stroke="#f0f0f0" stroke-width="0.8" fill="none"/>
<!-- bracket bottom dark band -->
<rect x="338" y="427" width="107" height="21.5" fill="url(#botband)"/>
<!-- uprights -->
<rect x="344.8" y="323.1" width="27.4" height="25.9" fill="url(#uprv)" stroke="#555" stroke-width="0.5"/>
<rect x="411.25" y="323.1" width="28.2" height="25.9" fill="url(#uprv)" stroke="#555" stroke-width="0.5"/>

<rect x="334" y="332.5" width="9.3" height="34.5" rx="3" fill="url(#pin)" stroke="#555" stroke-width="0.5"/>
<!-- slot & wheel -->
<rect x="372.2" y="318" width="39" height="62" fill="#2a2a2a"/>
<rect x="373.75" y="318" width="35.95" height="58" fill="url(#wheel)"/>
<linearGradient id="whin" x1="0" x2="0" y1="0" y2="1"><stop offset="0" stop-color="#a8a8a8"/><stop offset="0.5" stop-color="#c8c8c8"/><stop offset="1" stop-color="#d8d8d8"/></linearGradient><rect x="381.6" y="320" width="20.3" height="56" fill="url(#whin)" stroke="#444" stroke-width="0.5"/><path d="M374 376 Q391.7 380 409.5 376" stroke="#333" stroke-width="0.6" fill="none"/>
<path d="M373.75 349 H409.7" stroke="#333" stroke-width="0.6"/>
<path d="M371.4 377 H412 V387 L407 402 Q406 404.4 403 404.4 H380.4 Q377.4 404.4 376.4 402 L371.4 387Z" fill="url(#tongue)" stroke="#555" stroke-width="0.5"/><path d="M372.2 323 V377 M411.2 323 V377" stroke="#f8f8f8" stroke-width="1.2"/>
<!-- red bushings -->
<path d="M366 311 Q370 308 375 311 V327 Q368 326 366 320Z" fill="#e81818"/>
<path d="M417.5 311 Q413 308 408 311 V327 Q415 326 417.5 320Z" fill="#e81818"/>
<!-- rod end center block -->
<linearGradient id="hous" x1="0" x2="0" y1="0" y2="1"><stop offset="0" stop-color="#d8d8d8"/><stop offset="0.5" stop-color="#bcbcbc"/><stop offset="1" stop-color="#8a8a8a"/></linearGradient>
<path d="M364 287 H419 L410 298 V318 H374 V298Z" fill="#a4a4a4" stroke="#2a2a2a" stroke-width="0.6"/>
<path d="M368 288 Q392 282 416 288" stroke="#3a3a3a" stroke-width="0.6" fill="none"/>
<rect x="380" y="305" width="23" height="14" fill="#c0c0c0" stroke="#2a2a2a" stroke-width="0.6"/>
<!-- rod end housings -->
<path d="M343 288 H372 Q378 296 376 306 Q370 309 356 308.5 Q344 308 343 300Z" fill="url(#hous)" stroke="#2a2a2a" stroke-width="0.6"/>
<path d="M411 288 H442 Q443 300 440 306 Q430 309 412 308 Q406 298 411 288Z" fill="url(#hous)" stroke="#2a2a2a" stroke-width="0.6"/>
<path d="M344 294 Q358 293 372 295 M344 301 Q358 300 375 302 M352 288 Q350 298 353 308 M362 288 Q360 298 363 308.5 M370 290 Q366 298 370 307 M412 295 Q426 293 441 294 M410 302 Q426 300 441 301 M420 288 Q418 298 421 308 M430 288 Q428 298 431 308 M414 290 Q418 298 414 306" stroke="#3a3a3a" stroke-width="0.45" fill="none"/>
<!-- air valve -->
<rect x="335.5" y="293.5" width="16" height="19" rx="3" fill="#a8a8a8" stroke="#444" stroke-width="0.4"/>
<ellipse cx="330.5" cy="303.8" rx="7.2" ry="12.2" fill="#9a3a24"/>
<path d="M326.5 292.5 Q324 304 326.5 315 M331 291.8 Q328.5 304 331 315.8 M335 292.8 Q333 304 335 315" stroke="#1e120c" stroke-width="1.1" fill="none"/>
<!-- cylinder base silver -->
<path d="M328.7 263.8 H454.8 V283 Q454.8 290 442 290.5 H341 Q328.7 290 328.7 283Z" fill="url(#silver)" stroke="#444" stroke-width="0.5"/>
<path d="M328.7 271.6 H454.8" stroke="#3a3a3a" stroke-width="1"/>
<path d="M329 282.2 H454.5" stroke="#5a5a5a" stroke-width="0.6"/>
<rect x="329.5" y="282.6" width="124.8" height="6.5" rx="3" fill="#9c9c9c" opacity="0.55"/>
<!-- blue band -->
<rect x="330.8" y="246.3" width="122.4" height="17.5" fill="url(#cyl)"/>
<!-- white ring -->
<rect x="330.8" y="238.7" width="121.5" height="7.8" fill="url(#silver)"/>
<rect x="330.8" y="240.3" width="121.5" height="4" fill="#eeeeee"/>
<path d="M330.8 245.8 H452.3" stroke="#151515" stroke-width="1.1"/>
<!-- lower cylinder -->
<rect x="328.2" y="119" width="127.2" height="117" fill="url(#cyl)"/>
<rect x="328.7" y="235.2" width="126.2" height="3.5" fill="#2e2e34"/>
<!-- upper cylinder -->
<rect x="337" y="62" width="109.5" height="58" fill="url(#cyl)"/>
<path d="M337 116.5 H446.5 L455.4 123 Q392 118 328.2 123Z" fill="#0c0c1a"/><path d="M330 122.5 Q392 117.5 453.5 122.5" stroke="#3a3ab0" stroke-width="0.8" fill="none"/>
</svg>
</div>
<div id="tp" class="a">
 <div class="a" style="left:0;top:0.5px;width:338px;height:10.5px;background:#b2b4b8"></div>
 <div class="a" style="left:0;top:11px;width:338px;height:1px;background:#6e6e6e"></div>
 <div class="a" style="left:0;top:12px;width:338px;height:2px;background:#e2e2e2"></div>
 <svg class="a" style="left:5px;top:3px" width="8" height="6"><path d="M0.8 0.8 L3 3 L0.8 5.2 M4 0.8 L6.2 3 L4 5.2" stroke="#222" stroke-width="1.1" fill="none"/></svg>
 <div class="t" style="left:142px;top:2px;font-size:6.6px;line-height:8px;font-weight:bold;color:#2a2a2a;letter-spacing:-0.35px">3DEXPERIENCE</div>
 <svg class="a" style="left:316px;top:1.5px" width="9" height="9" viewBox="0 0 9 9"><circle cx="4.5" cy="4.5" r="3" fill="none" stroke="#444" stroke-width="1.3" stroke-dasharray="1.3 0.9"/><circle cx="4.5" cy="4.5" r="1.4" fill="#eee" stroke="#444" stroke-width="0.6"/></svg>
 <svg class="a" style="left:327px;top:1.5px" width="9" height="9" viewBox="0 0 9 9"><path d="M5 0.8 L8.2 4 L6.8 4.5 L4.5 6.8 L4 8.2 L0.8 5 L2.2 4.5 L4.5 2.2Z" fill="#222"/><path d="M2.5 6.5 L0.5 8.5" stroke="#222" stroke-width="0.9"/></svg>
 <!-- blue bar -->
 <div class="a" style="left:4px;top:13.8px;width:333px;height:22.7px;background:#0a5490"></div>
 <svg class="a" style="left:7.5px;top:17px" width="17" height="17" viewBox="0 0 17 17"><circle cx="8.5" cy="8.5" r="8" fill="#0c2a6a"/><circle cx="8.5" cy="8.5" r="7.5" fill="none" stroke="#3a7ac8" stroke-width="1"/><path d="M4 6 Q8.5 2 13 6" stroke="#b8d4f0" stroke-width="1.2" fill="none"/><path d="M7 7 L11 8.8 L7 10.6Z" fill="#dbe8f8"/><path d="M6 13 H11" stroke="#9ab8e0" stroke-width="0.8"/></svg>
 <svg class="a" style="left:32px;top:20px" width="10" height="11" viewBox="0 0 10 11"><rect x="0.5" y="1" width="6" height="5" fill="#e8e8e8" stroke="#aaa" stroke-width="0.5"/><rect x="2.5" y="3" width="5" height="4" fill="#c8c8c8"/><path d="M5 7 L9 10.5 M9 7 L5 10.5" stroke="#6ab0e8" stroke-width="1.2"/></svg>
 <div class="a" style="left:46px;top:21.4px;width:31px;height:7.8px;background:#4a4218"></div>
 <div class="t" style="left:46.5px;top:20.8px;font-size:8px;line-height:9px;font-weight:bold;color:#111;letter-spacing:0.1px">Markup</div>
 <div class="t" style="left:76.7px;top:20.8px;font-size:8px;line-height:9px;color:#e8eef6">_MOTO KNEE A</div>
 <div class="a" style="left:249.5px;top:22px;width:2px;height:2px;background:#fff;border-radius:1px"></div>
 <div class="a" style="left:249.5px;top:25.5px;width:2px;height:2px;background:#fff;border-radius:1px"></div>
 <div class="a" style="left:249.5px;top:29px;width:2px;height:2px;background:#fff;border-radius:1px"></div>
 <div class="a" style="left:264px;top:16px;width:1px;height:18.6px;background:#8ab0d0"></div>
 <svg class="a" style="left:275.5px;top:21.5px" width="5" height="8"><path d="M4 0.5 L1 4 L4 7.5" stroke="#cfe0f0" stroke-width="1.1" fill="none"/></svg>
 <svg class="a" style="left:299.5px;top:21.5px" width="5" height="8"><path d="M1 0.5 L4 4 L1 7.5" stroke="#cfe0f0" stroke-width="1.1" fill="none"/></svg>
 <svg class="a" style="left:321px;top:21.5px" width="9" height="8"><path d="M0.8 0.5 L8.2 7.5 M8.2 0.5 L0.8 7.5" stroke="#fff" stroke-width="1.7"/></svg>
 <!-- model view -->
 <div class="a" id="mv" style="left:9.5px;top:36.8px;width:322.5px;height:459.2px;overflow:hidden;background:linear-gradient(172deg,#f0f1f3 0%,#e6e8eb 30%,#dde0e5 55%,#d9dde3 80%,#dcdfe4 100%)">
<svg class="a" style="left:0;top:0" width="322.5" height="459.2" viewBox="695.5 98.8 322.5 459.2">
<defs>
 <linearGradient id="pcyl" x1="0" x2="1" y1="0" y2="0">
  <stop offset="0" stop-color="#24245e"/><stop offset="0.06" stop-color="#30306e"/><stop offset="0.45" stop-color="#343474"/><stop offset="0.5" stop-color="#3e3a7a"/><stop offset="0.62" stop-color="#524680"/><stop offset="0.8" stop-color="#3c3874"/><stop offset="0.95" stop-color="#30306c"/><stop offset="1" stop-color="#24245a"/>
 </linearGradient>
 <linearGradient id="pgray" x1="0" x2="0" y1="0" y2="1">
  <stop offset="0" stop-color="#a8a4a2"/><stop offset="0.35" stop-color="#b4b0ae"/><stop offset="0.4" stop-color="#8e8a88"/><stop offset="1" stop-color="#7e7a78"/>
 </linearGradient>
</defs>
<!-- frame -->
<path d="M722.8 98 H735.8 V223 L742 300 L750 381 L758 387 V447 H741.5 L728.2 300 L722.8 223Z" fill="#726e6a" stroke="#3a3836" stroke-width="0.7"/><path d="M733.5 98 V223 L739.8 300 L747.5 381" stroke="#4a4644" stroke-width="0.6" fill="none"/>
<path d="M898.9 98 H884.4 V223 L879 300 L872 381 L861 387 V447 H879.3 L891 300 L898.9 223Z" fill="#726e6a" stroke="#3a3836" stroke-width="0.7"/><path d="M887 98 V223 L881.5 300 L874.5 381" stroke="#4a4644" stroke-width="0.6" fill="none"/>
<path d="M741.5 447 H879.3 V430 H741.5Z" fill="#5a5654"/>
<path d="M742 402 Q734.5 403 734 410 V424 Q734.5 430 742 430.5Z" fill="#a8a29e" stroke="#3a3836" stroke-width="0.5"/><path d="M736 408 H742 M736 425 H742" stroke="#555" stroke-width="0.4"/><path d="M861.5 386 Q869 387 869.5 393 V400 Q869 404 861.5 404Z" fill="#a8a29e" stroke="#3a3836" stroke-width="0.5"/>
<!-- bracket -->
<rect x="758.5" y="386" width="103" height="20" fill="#d8d8e8"/>
<rect x="758.5" y="405.6" width="103" height="21.5" fill="#b4b4b8" stroke="#444" stroke-width="0.4"/>
<rect x="758.5" y="427" width="103" height="20" fill="#9a9a9e" stroke="#444" stroke-width="0.4"/>
<path d="M748 381 Q756 383 758.5 386 M872 381 Q864 383 861.5 386" stroke="#555" stroke-width="0.5" fill="none"/>
<!-- wheel -->
<rect x="795" y="300" width="29.5" height="79" fill="#7c7876" stroke="#333" stroke-width="0.6"/>
<rect x="800.5" y="313" width="19.5" height="66" fill="#908c8a" stroke="#333" stroke-width="0.6"/>
<path d="M795 346 H824.5" stroke="#333" stroke-width="0.5"/>
<!-- housings -->
<path d="M789 293 H832 L825.5 300 V318 H794.7 V300Z" fill="#7e7a78" stroke="#2a2a2a" stroke-width="0.6"/>
<rect x="800" y="313" width="20.7" height="8" fill="#908c8a" stroke="#2a2a2a" stroke-width="0.5"/>
<path d="M757.8 293 H790 Q796 300 794.7 310 Q790 316 776 316 Q760 316 757.8 308Z" fill="#908c8a" stroke="#2a2a2a" stroke-width="0.6"/>
<path d="M830 293 H854 Q856 303 853.5 311 Q845 316 828 315 Q822 305 830 293Z" fill="#908c8a" stroke="#2a2a2a" stroke-width="0.6"/>
<path d="M760 300 Q776 298 793 301 M759 307 Q776 306 794 308 M772 293 Q769 304 772 316 M783 293 Q780 304 783 316 M826 301 Q840 299 855 300 M826 308 Q840 307 854 307 M837 293 Q835 304 838 316 M846 293 Q844 304 847 315" stroke="#3a3a3a" stroke-width="0.5" fill="none"/>
<path d="M754 295 Q762 293 772 296 M842 296 Q852 293 866 295" stroke="#9ac0e8" stroke-width="1.2" fill="none"/>
<rect x="752" y="299" width="18" height="19" rx="4" fill="#8a8684" stroke="#444" stroke-width="0.4"/>
<ellipse cx="748.5" cy="309.5" rx="5" ry="11.5" fill="#7a4a40"/>
<path d="M747 299 Q745 309.5 747 320 M751 298.5 Q749 309.5 751 320.5" stroke="#2a1a14" stroke-width="0.9" fill="none"/>
<!-- red shapes near wheel -->
<path d="M787.5 318 Q791 313 794.7 316 V334 Q789 332 787.5 326Z" fill="#d81828"/>
<path d="M832 318 Q828.5 313 824.8 316 V334 Q830.5 332 832 326Z" fill="#d81828"/>
<!-- base -->
<path d="M751.6 273.3 H869.9 V289 Q869.9 294 860 294 H761 Q751.6 294 751.6 289Z" fill="#9e9a98" stroke="#3a3a3a" stroke-width="0.5"/>
<rect x="751.6" y="273.3" width="118.3" height="7.2" fill="#b2aeac"/>
<path d="M751.6 280.8 H869.9 M752 289.7 H869.5" stroke="#3a3a3a" stroke-width="0.6"/>
<!-- blue band & rings -->
<rect x="751" y="256.5" width="119.5" height="17" fill="url(#pcyl)"/>
<rect x="751" y="246" width="119.5" height="10.5" fill="#a8a6a6" stroke="#333" stroke-width="0.4"/>
<rect x="752" y="248.7" width="117.5" height="4.8" fill="#d8d6d4"/>
<path d="M751 255.8 H870.5" stroke="#2a2a2a" stroke-width="1.2"/>
<!-- lower cylinder -->
<rect x="750.5" y="139" width="120" height="108" fill="url(#pcyl)"/>
<!-- upper cyl -->
<rect x="758.9" y="98" width="103.3" height="37" fill="url(#pcyl)"/>
<path d="M758.9 135 Q810 131 862.2 135 L870.5 141.5 Q810 137 750.5 141.5Z" fill="#34346e"/><path d="M761 137.5 Q810 132.8 859 137.5" stroke="#d4d4d8" stroke-width="3.4" fill="none"/><path d="M751 141.3 Q810 136.8 870 141.3" stroke="#1e1e40" stroke-width="0.6" fill="none"/>
<path d="M810.3 98 V296" stroke="#151520" stroke-width="0.7"/>
<!-- markup overlays -->
<rect x="757.5" y="319.5" width="36.5" height="86" fill="none" stroke="#d41a2a" stroke-width="1.6"/>
<rect x="825" y="319.5" width="36" height="86" fill="none" stroke="#d41a2a" stroke-width="1.6"/>
<rect x="750.2" y="332" width="6" height="41.5" fill="none" stroke="#1a2a9a" stroke-width="1.4"/>
<path d="M759 341 H794 M759 366 H794 M827 340 H860 M827 344 H860 M827 357 H860 M827 367 H860" stroke="#c04060" stroke-width="0.7" stroke-dasharray="4 3"/>
<path d="M759 343.5 H794 M759 368 H794 M827 342 H860 M827 359 H860" stroke="#6080c0" stroke-width="0.7" stroke-dasharray="4 3"/>
<path d="M879.3 311.5 H869 L846 347" stroke="#3a5ab0" stroke-width="0.6" fill="none"/>
<path d="M843.5 350.5 L845 344 L849 347.5Z" fill="#1a2a9a"/>
<rect x="879.5" y="304.2" width="106" height="15.3" rx="1.5" fill="#fff" stroke="#8090b8" stroke-width="0.8"/>
<text x="884.5" y="315.2" font-family="Liberation Sans" font-size="8.6" fill="#222">M6 SHOULDER SCREW</text>
</svg>
</div>
</div>
<div id="status" class="a"></div>
<!--EXTRAS-->
<div class="a" style="left:672px;top:102.3px;width:14.5px;height:12.8px;background:#fbfbfb;border:1px solid #b8b8b8"></div>
<svg class="a" style="left:673.7px;top:103.3px" width="11" height="11" viewBox="0 0 11 11"><circle cx="5.5" cy="5.5" r="5" fill="#123a7a"/><path d="M2.5 4 Q5.5 1.5 8.5 4" stroke="#9cc4f0" stroke-width="1" fill="none"/><path d="M4.5 4.5 L7.5 6 L4.5 7.5Z" fill="#d8e8f8"/></svg>
<div class="a" style="left:672px;top:115.1px;width:14.5px;height:12.8px;background:#dcdcdc;border:1px solid #b8b8b8"></div>
<svg class="a" style="left:673.7px;top:116.1px" width="11" height="11" viewBox="0 0 11 11"><path d="M1 5.5 L5.5 1.5 L10 5.5" stroke="#2a6aa8" stroke-width="1.5" fill="none"/><path d="M2.5 5.5 V10 H8.5 V5.5 L5.5 3Z" fill="#9a9a9a"/><rect x="4.5" y="7" width="2" height="3" fill="#eee"/></svg>
<div class="a" style="left:672px;top:127.9px;width:14.5px;height:12.8px;background:#dcdcdc;border:1px solid #b8b8b8"></div>
<svg class="a" style="left:673.7px;top:128.9px" width="11" height="11" viewBox="0 0 11 11"><path d="M2 3 L5.5 1.5 L9 3 V9 L5.5 10.5 L2 9Z" fill="#b8b8b8" stroke="#666" stroke-width="0.6"/><path d="M2 3 L5.5 4.5 L9 3 M5.5 4.5 V10.5" stroke="#666" stroke-width="0.6" fill="none"/></svg>
<div class="a" style="left:672px;top:140.6px;width:14.5px;height:12.8px;background:#dcdcdc;border:1px solid #b8b8b8"></div>
<svg class="a" style="left:673.7px;top:141.6px" width="11" height="11" viewBox="0 0 11 11"><path d="M1 2.5 H4.5 L5.5 3.5 H10 V9.5 H1Z" fill="#f4f4f4" stroke="#666" stroke-width="0.7"/><path d="M1 9.5 L3 5 H10.5 L9 9.5" fill="#fafafa" stroke="#666" stroke-width="0.6"/></svg>
<div class="a" style="left:672px;top:153.4px;width:14.5px;height:12.8px;background:#dcdcdc;border:1px solid #b8b8b8"></div>
<svg class="a" style="left:673.7px;top:154.4px" width="11" height="11" viewBox="0 0 11 11"><rect x="1" y="2" width="9" height="7" fill="#c8a040"/><path d="M2 4 H9 M2 6.5 H9" stroke="#6a4a10" stroke-width="0.8"/><circle cx="4" cy="5" r="1.3" fill="#fff"/></svg>
<div class="a" style="left:672px;top:166.2px;width:14.5px;height:12.8px;background:#dcdcdc;border:1px solid #b8b8b8"></div>
<svg class="a" style="left:673.7px;top:167.2px" width="11" height="11" viewBox="0 0 11 11"><circle cx="5.5" cy="5.5" r="4.8" fill="#2a9a3a"/><path d="M5.5 5.5 V0.7 A4.8 4.8 0 0 1 10.3 5.5Z" fill="#e02a20"/><path d="M5.5 5.5 H10.3 A4.8 4.8 0 0 1 5.5 10.3Z" fill="#2a6ad0"/><path d="M5.5 5.5 V10.3 A4.8 4.8 0 0 1 0.7 5.5Z" fill="#f0c020"/></svg>
<div class="a" style="left:672px;top:179.0px;width:14.5px;height:12.8px;background:#dcdcdc;border:1px solid #b8b8b8"></div>
<svg class="a" style="left:673.7px;top:180.0px" width="11" height="11" viewBox="0 0 11 11"><rect x="1" y="1" width="9" height="9" fill="#eef2f6" stroke="#3a6a9a" stroke-width="0.7"/><path d="M2.5 3 H8.5 M2.5 5.5 H8.5 M2.5 8 H8.5" stroke="#2a5a9a" stroke-width="1"/></svg>
<div class="a" style="left:672px;top:191.8px;width:14.5px;height:12.8px;background:#dcdcdc;border:1px solid #b8b8b8"></div>
<svg class="a" style="left:673.7px;top:192.8px" width="11" height="11" viewBox="0 0 11 11"><rect x="1" y="1.5" width="9" height="8" fill="#cfdae8" stroke="#555" stroke-width="0.6"/><path d="M2 8 L5 5 L7 7 L9 4" stroke="#d09020" stroke-width="1.2" fill="none"/></svg>
<svg class="a" style="left:697px;top:311px" width="5" height="8"><path d="M1 0.5 L4 4 L1 7.5" stroke="#888" stroke-width="1" fill="none"/></svg>
<svg class="a" style="left:615px;top:66px" width="66" height="10" viewBox="0 0 66 10"><rect x="0.5" y="0.5" width="8" height="9" fill="none" stroke="#9a9a9a" stroke-width="0.8"/><path d="M3 0.5 V9.5 M6.5 3 L4.5 5 L6.5 7" stroke="#9a9a9a" stroke-width="0.8" fill="none"/><rect x="14.5" y="0.5" width="8" height="9" fill="none" stroke="#9a9a9a" stroke-width="0.8"/><path d="M20 0.5 V9.5 M16 3 L18 5 L16 7" stroke="#9a9a9a" stroke-width="0.8" fill="none"/><path d="M29.5 8.5 H35.5" stroke="#9a9a9a" stroke-width="1"/><rect x="42.5" y="3.5" width="5.5" height="5.5" fill="none" stroke="#9a9a9a" stroke-width="0.8"/><path d="M45 3.5 V1 H50.5 V6.5 H48" fill="none" stroke="#9a9a9a" stroke-width="0.8"/><path d="M57.5 1.5 L64 8 M64 1.5 L57.5 8" stroke="#9a9a9a" stroke-width="0.9"/></svg>
<svg class="a" style="left:318px;top:62px;opacity:0.8" width="180" height="18" viewBox="318 62 180 18">
<circle cx="325.9" cy="68" r="2.6" fill="none" stroke="#d0d8e8" stroke-width="1"/><path d="M324 70 L321.5 73" stroke="#3a8ad8" stroke-width="1.4"/>
<circle cx="341" cy="68" r="2.6" fill="none" stroke="#c0c8f0" stroke-width="1"/><path d="M339 70 L336.5 73" stroke="#3a8ad8" stroke-width="1.4"/>
<path d="M349.5 73 L356 66 L358 68 L351.5 74Z" fill="#c8c8e0"/>
<rect x="363" y="65" width="7" height="8" fill="#2a6a8a" opacity="0.8"/><path d="M364 67 H369 M364 70 H369 M366.5 65 V73" stroke="#a0d0e0" stroke-width="0.7"/>
<rect x="378" y="65" width="8" height="8.5" fill="#2a5a9a"/><path d="M379 67 H385 M379 70 H385 M382 65 V73.5" stroke="#8ac0e0" stroke-width="0.7"/>
<circle cx="391.5" cy="69" r="0.6" fill="#aab"/><circle cx="413" cy="69" r="0.6" fill="#aab"/>
<rect x="401" y="64.5" width="6.5" height="9" fill="#3a7a9a" opacity="0.85"/><path d="M402 66.5 H406.5 M402 70 H406.5" stroke="#c0e0f0" stroke-width="0.7"/>
<ellipse cx="424.5" cy="69" rx="4.5" ry="2.8" fill="#e8e8f0"/><circle cx="424.5" cy="69" r="1.6" fill="#334"/>
<circle cx="443" cy="67" r="2.3" fill="#d83a2a"/><circle cx="447" cy="67" r="2.3" fill="#3a6ad0"/><circle cx="445" cy="70.5" r="2.3" fill="#3aa03a"/><circle cx="445" cy="72" r="1.5" fill="#e0b030"/>
<circle cx="456" cy="67" r="2.3" fill="#d83a2a"/><circle cx="460" cy="67" r="2.3" fill="#3a6ad0"/><circle cx="458" cy="70.5" r="2.3" fill="#3aa03a"/>
<rect x="476" y="67" width="9" height="5" fill="#d8d8d8" stroke="#999" stroke-width="0.5"/>
</svg>
<svg class="a" style="left:134px;top:500px" width="26" height="32" viewBox="134 500 26 32"><text x="151.8" y="507.5" font-family="Liberation Sans" font-size="4.5" fill="#6a8a6a">Y</text><path d="M153 511 V526.5" stroke="#d8ecd8" stroke-width="1.6"/><path d="M151.5 515 L153 513 L154.5 515Z" fill="#3a8a3a"/><path d="M139 526.7 H153" stroke="#e01818" stroke-width="1.6"/><path d="M137.5 526.7 L140.5 524.9 V528.5Z" fill="#e01818"/><text x="134" y="526.5" font-family="Liberation Sans" font-size="4.5" fill="#e01818">x</text><circle cx="153.2" cy="526.7" r="1.7" fill="#1a2ad0"/></svg>
<div class="t" style="left:137.5px;top:548.5px;font-size:7px;line-height:8px;font-weight:bold;color:#222;letter-spacing:0.2px">Back Bracket</div>
<svg class="a" style="left:982px;top:502px" width="22" height="22" viewBox="982 502 22 22"><text x="997" y="509" font-family="Liberation Sans" font-size="6.5" fill="#222">y</text><path d="M1000 507.5 V521 H988" stroke="#333" stroke-width="0.8" fill="none"/><text x="983" y="523.5" font-family="Liberation Sans" font-size="6.5" fill="#222">x</text></svg>
<div class="a" style="left:816.3px;top:521.8px;width:34px;height:11.2px;background:#a9cce8;border-top:1px solid #c8dcec"></div>
<div class="t" style="left:816.3px;top:523.5px;width:34px;text-align:center;font-size:6.6px;color:#3a5a7a;letter-spacing:-0.2px">View</div>
<div class="a" style="left:850.3px;top:521.8px;width:34.4px;height:11.2px;background:#e4e4e4;border:1px solid #d0d0d0;border-bottom:none"></div>
<div class="t" style="left:850.3px;top:523.5px;width:34.4px;text-align:center;font-size:6.6px;color:#555;letter-spacing:-0.2px">Tools</div>
<svg class="a" style="left:887px;top:522.5px" width="10" height="7"><path d="M1 1 L5 5 L9 1" stroke="#fff" stroke-width="2.2" fill="none"/><path d="M1 1 L5 5 L9 1" stroke="#c8c8c8" stroke-width="0.8" fill="none"/></svg>
<div class="a" style="left:711px;top:532.9px;width:291.7px;height:25.2px;background:#e9e9e9;border:1px solid #d8d8d8;border-bottom:none"></div>
<div class="a" style="left:711px;top:532.9px;width:55.3px;height:25.2px;background:#fafafa;border-left:1px solid #d8d8d8;border-top:1px solid #d8d8d8"></div>
<div class="a" style="left:766px;top:533px;width:1px;height:25px;background:#9a9a9a"></div>
<div class="a" style="left:735.3px;top:537px;width:1px;height:17px;background:#cfcfcf"></div>
<div class="a" style="left:812.5px;top:537px;width:1px;height:17px;background:#cfcfcf"></div>
<div class="a" style="left:950.0px;top:537px;width:1px;height:17px;background:#cfcfcf"></div>
<div class="a" style="left:976.3px;top:537px;width:1px;height:17px;background:#cfcfcf"></div>
<svg class="a" style="left:711px;top:533px" width="292" height="25" viewBox="711 533 292 25">
<rect x="715" y="539" width="11" height="8" fill="#1a1a1a"/><path d="M718 549 H723" stroke="#333" stroke-width="1"/>
<circle cx="724.5" cy="548.5" r="4" fill="#fff" stroke="#2a6aa8" stroke-width="1.2"/><path d="M723.2 546.5 L726.3 548.5 L723.2 550.5Z" fill="#1a3a6a"/>
<rect x="742" y="540" width="14" height="11" fill="#b8c4cc" stroke="#555" stroke-width="0.5"/><path d="M741 538 L747 545 M747 538 L743 543" stroke="#2a8ad0" stroke-width="1.2"/><path d="M743 549 Q748 545 755 549" stroke="#3a8ac0" stroke-width="1.2" fill="none"/>
<path d="M759 544.5 H761 L760 546Z" fill="#222"/>
<text x="769.5" y="549.5" font-family="Liberation Sans" font-size="9" fill="#444" letter-spacing="-0.4">Ab<tspan fill="#bbb">c</tspan></text>
<rect x="791" y="541" width="17" height="8.5" fill="#fff" stroke="#444" stroke-width="0.8"/><text x="792.5" y="548" font-family="Liberation Sans" font-weight="bold" font-size="6.5" fill="#333" letter-spacing="-0.3">Abc</text>
<circle cx="827.5" cy="543.5" r="4.5" fill="#fff" stroke="#2a6aa8" stroke-width="1"/><circle cx="827.5" cy="543.5" r="1.5" fill="none" stroke="#555" stroke-width="0.6"/><path d="M824.5 546.5 L820.5 551" stroke="#2a6aa8" stroke-width="1.6"/>
<path d="M848 538 V553 M840.5 545.5 H855.5" stroke="#3a8ac8" stroke-width="1.8"/><path d="M845.5 540 L848 537 L850.5 540 M845.5 551 L848 554 L850.5 551 M843 543 L840 545.5 L843 548 M853 543 L856 545.5 L853 548" fill="#3a8ac8" stroke="#3a8ac8" stroke-width="1"/>
<path d="M863.5 543 Q867 539 873.5 541.5 Q874 544 870 544 Z" fill="#fafafa" stroke="#444" stroke-width="0.7"/><circle cx="871" cy="548" r="3.5" fill="#2a7ac0"/>
<circle cx="895" cy="543" r="4.3" fill="#fff" stroke="#2a6aa8" stroke-width="1"/><path d="M892 546.5 L888.5 551" stroke="#2a6aa8" stroke-width="1.6"/><path d="M887.5 538 V547 M886 538 H889 M886 547 H889" stroke="#333" stroke-width="0.8"/>
<ellipse cx="915.2" cy="546" rx="4.5" ry="2.7" fill="#fff" stroke="#333" stroke-width="0.8"/><circle cx="915.2" cy="546" r="1.5" fill="#222"/><path d="M909 543 L907.5 546 L909 549 M921.5 543 L923 546 L921.5 549 M912 539.5 Q915.2 538 918.5 539.5 M912 552.5 Q915.2 554 918.5 552.5" stroke="#3a8ac8" stroke-width="1" fill="none"/>
<path d="M932.5 540 V551 Q937 553 941.5 551 V540" fill="#2a6aa8"/><ellipse cx="937" cy="540" rx="4.5" ry="1.8" fill="#5aa0d8"/><circle cx="942" cy="551" r="2.3" fill="#333"/><circle cx="942" cy="551" r="0.9" fill="#ddd"/>
<path d="M956 550 L968 540" stroke="#aaa" stroke-width="0.6"/><path d="M957 543 L962 538.5" stroke="#2a7ac0" stroke-width="1.3"/><path d="M962 552 V548 M960 551 H966" stroke="#2a7ac0" stroke-width="1.2"/>
<rect x="980" y="540" width="17.5" height="11.5" fill="#fafafa" stroke="#666" stroke-width="0.7"/><rect x="992" y="540" width="5.5" height="11.5" fill="#3a8ac8"/>
</svg>
<div class="a" style="left:0;top:557.5px;width:686.5px;height:8px;background:#f4f4f4;border-top:1px solid #cfcfcf;border-right:1px solid #5a5a6a"></div>
<div class="a" style="left:14.6px;top:558px;width:34.2px;height:8px;background:#c4c4c4"></div>
<svg class="a" style="left:15px;top:559px" width="34" height="6" viewBox="0 0 34 6"><path d="M3 1 V5 M7 1 L5 3 L7 5 M14 1 L12 3 L14 5 M20 1 L22 3 L20 5 M27 1 L29 3 L27 5 M31 1 V5" stroke="#9a9a9a" stroke-width="0.7" fill="none"/></svg>
<div class="t" style="left:48.8px;top:558.2px;width:30.2px;text-align:center;font-size:6.6px;font-weight:bold;color:#222;line-height:8px">Model</div>
<div class="a" style="left:79px;top:558px;width:57.7px;height:8px;background:#d8d8d8;border-left:1px solid #bbb;border-right:1px solid #bbb"></div>
<div class="t" style="left:79px;top:558.2px;width:57.7px;text-align:center;font-size:6.6px;color:#5a4a5a;line-height:8px;letter-spacing:-0.2px">Motion Study 1</div>
<div class="t" style="left:1px;top:567.5px;font-size:6.6px;color:#333;line-height:8px;letter-spacing:-0.6px">SOLIDWORKS</div>
<div class="t" style="left:856px;top:567.5px;font-size:6.6px;color:#5a2a4a;line-height:8px;letter-spacing:-0.2px">Under Defined</div>
<div class="t" style="left:967px;top:567.5px;font-size:6.6px;color:#333;line-height:8px;letter-spacing:-0.2px">MMGS</div>
<svg class="a" style="left:997px;top:570.5px" width="4" height="3"><path d="M0 0 H4 L2 3Z" fill="#444"/></svg>
<svg class="a" style="left:1013px;top:567.5px" width="10" height="9" viewBox="0 0 10 9"><path d="M1 3 Q5 0 9 3 L8 8 H2Z" fill="#eee" stroke="#555" stroke-width="0.8"/></svg>
<div class="a" style="left:130px;top:300px;width:5.6px;height:20.2px;background:#f9f9f9;border:1px solid #bdbdbd;border-left:none"></div><svg class="a" style="left:131.5px;top:307.5px" width="3" height="5"><path d="M2.5 0.5 L0.7 2.5 L2.5 4.5" stroke="#aaa" stroke-width="0.9" fill="none"/></svg>
<div class="a" style="left:686px;top:74px;width:1px;height:491px;background:#b4b4b8"></div>
<div class="a" style="left:0;top:74px;width:1px;height:483px;background:#d4d4d4"></div>
<!--/EXTRAS-->
</body></html>
